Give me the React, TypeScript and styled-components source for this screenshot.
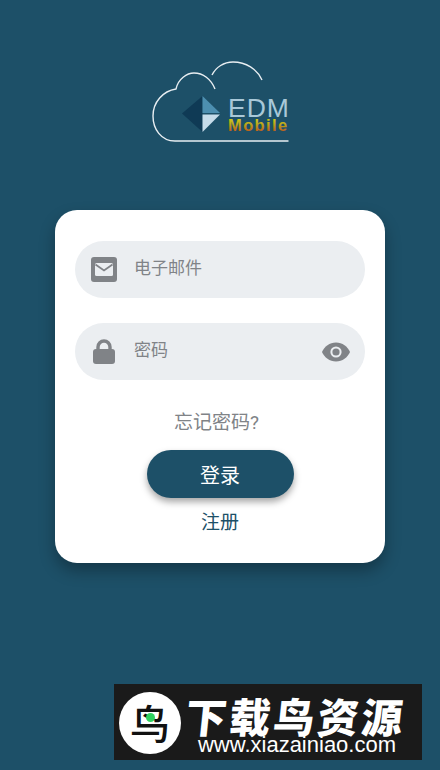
import React from 'react'
import styled, { createGlobalStyle } from 'styled-components'

const mainColor = '#1d5068'
const grey = '#808387'

const GlobalStyle = createGlobalStyle`
  html, body {
    margin: 0;
    padding: 0;
    background: ${mainColor};
    font-family: Roboto, "Noto Sans CJK SC", sans-serif;
  }
`

const Page = styled.div`
  position: relative;
  width: 440px;
  height: 770px;
  overflow: hidden;
  background: ${mainColor};
  display: flex;
  flex-direction: column;
  align-items: center;
  padding-top: 58px;
  box-sizing: border-box;
`

const LogoBox = styled.div`
  width: 144px;
  height: 90px;
  margin-bottom: 62px;
  svg { display: block; }
`

const Card = styled.div`
  width: 330px;
  height: 353px;
  box-sizing: border-box;
  padding: 31px 20px 0;
  background: #fff;
  border-radius: 22px;
  box-shadow: 0 8px 16px rgba(0, 0, 0, .3);
  display: flex;
  flex-direction: column;
  align-items: center;
`

const Field = styled.div<{ last?: boolean }>`
  width: 100%;
  height: 57px;
  flex-shrink: 0;
  margin-bottom: ${props => props.last ? '30px' : '25px'};
  padding: 0 15px 0 15px;
  box-sizing: border-box;
  border-radius: 29px;
  background: #ebeef1;
  display: flex;
  align-items: center;
`

const FieldIcon = styled.div`
  width: 28px;
  height: 28px;
  margin-right: 16px;
  display: flex;
  align-items: center;
  justify-content: center;
`

const FieldLabel = styled.span`
  flex: 1;
  font-size: 17px;
  line-height: 20px;
  margin-top: -4px;
  color: ${grey};
`

const Forgot = styled.div`
  font-size: 19px;
  line-height: 26px;
  color: ${grey};
  margin: 0 7px 14px 0;
`

const LoginButton = styled.button`
  width: 147px;
  height: 48px;
  flex-shrink: 0;
  border: 0;
  border-radius: 24px;
  background: ${mainColor};
  color: #fff;
  font: inherit;
  font-size: 20px;
  box-shadow: 0 4px 7px rgba(0, 0, 0, .35);
  margin-bottom: 12px;
`

const Register = styled.div`
  font-size: 19px;
  line-height: 26px;
  color: ${mainColor};
`

const Watermark = styled.div`
  position: absolute;
  left: 114px;
  top: 684px;
  width: 308px;
  height: 76px;
  box-sizing: border-box;
  padding: 8px 0 0 5px;
  background: #1a1a1a;
  display: flex;
  gap: 5px;
`

const BirdCircle = styled.div`
  position: relative;
  width: 62px;
  height: 62px;
  border-radius: 50%;
  background: #fff;
  color: #111;
  font-size: 40px;
  font-weight: 500;
  line-height: 60px;
  text-align: center;
  font-family: "Noto Sans CJK SC", sans-serif;

  &::after {
    content: '';
    position: absolute;
    left: 27px;
    top: 21px;
    width: 9px;
    height: 9px;
    border-radius: 50%;
    background: #2fd25f;
  }
`

const WatermarkText = styled.div`
  width: 222px;
  display: flex;
  flex-direction: column;
  align-items: center;
`

const WatermarkTitle = styled.div`
  text-align: center;
  color: #fff;
  font-family: "Noto Sans CJK SC", sans-serif;
  font-size: 41px;
  font-weight: 900;
  line-height: 40px;
  letter-spacing: 3px;
  white-space: nowrap;
  transform: skewX(-6deg);
  margin: 3px 3px 0 0;
`

const WatermarkUrl = styled.div`
  color: #fff;
  font-family: "Liberation Sans", sans-serif;
  font-size: 22px;
  line-height: 24px;
  margin-top: -2px;
`

const Logo = () => (
  <svg width="144" height="90" viewBox="0 0 144 90">
    <defs>
      <linearGradient id="mobileFill" x1="0" y1="0" x2="0" y2="1">
        <stop offset="0" stopColor="#d6e01c" />
        <stop offset=".5" stopColor="#b8a01a" />
        <stop offset="1" stopColor="#c2401a" />
      </linearGradient>
    </defs>
    <path
      d="M140.5 83 H27 C13 83 5 71 5 58 C5 44 15 33 28 31 C30 21 39 15 46 15 C55 15 63 21 67 31 M64 17 C68 9 76 4 85 4 C98 4 109 11 114 22"
      fill="none"
      stroke="#e8eef2"
      strokeWidth="1.4"
    />
    <path d="M54.5 38 L34 55.5 L54.5 74 Z" fill="#0f3a55" />
    <path d="M54.5 38 V55 H72 Z" fill="#4d8fb0" />
    <path d="M54.5 74 V56.5 H72 Z" fill="#c6dcea" />
    <text x="80" y="59" fontFamily="'Liberation Sans', sans-serif" fontSize="26.5" letterSpacing="1" fill="#a9c8d8">EDM</text>
    <text x="80" y="73" fontFamily="'Liberation Sans', sans-serif" fontSize="16.5" fontWeight="700" letterSpacing="1.4" fill="url(#mobileFill)">Mobile</text>
  </svg>
)

const MailIcon = () => (
  <svg width="27" height="26" viewBox="0 0 27 26">
    <rect x="0" y="0" width="26" height="25" rx="3" fill={grey} />
    <rect x="4" y="6" width="18" height="13" rx="1.5" fill="#ebeef1" />
    <path d="M4.5 7.5 L13 13.5 L21.5 7.5" fill="none" stroke={grey} strokeWidth="1.8" />
  </svg>
)

const LockIcon = () => (
  <svg width="24" height="26" viewBox="0 0 24 26">
    <path d="M6 12 V8 a6 6 0 0 1 12 0 V12" fill="none" stroke={grey} strokeWidth="3.4" />
    <rect x="1" y="10" width="22" height="15" rx="3" fill={grey} />
  </svg>
)

const EyeIcon = () => (
  <svg width="28" height="20" viewBox="0 0 28 20">
    <path d="M14 .5 C7.5 .5 2.5 4.5 0 10 C2.5 15.5 7.5 19.5 14 19.5 C20.5 19.5 25.5 15.5 28 10 C25.5 4.5 20.5 .5 14 .5 Z" fill={grey} />
    <circle cx="14" cy="10" r="5.6" fill="#ebeef1" />
    <circle cx="14" cy="10" r="3.6" fill={grey} />
  </svg>
)

const App: React.FC = () => {
  return (
    <Page>
      <GlobalStyle />
      <LogoBox>
        <Logo />
      </LogoBox>
      <Card>
        <Field>
          <FieldIcon><MailIcon /></FieldIcon>
          <FieldLabel>电子邮件</FieldLabel>
        </Field>
        <Field last>
          <FieldIcon><LockIcon /></FieldIcon>
          <FieldLabel>密码</FieldLabel>
          <EyeIcon />
        </Field>
        <Forgot>忘记密码?</Forgot>
        <LoginButton>登录</LoginButton>
        <Register>注册</Register>
      </Card>
      <Watermark>
        <BirdCircle>鸟</BirdCircle>
        <WatermarkText>
          <WatermarkTitle>下载鸟资源</WatermarkTitle>
          <WatermarkUrl>www.xiazainiao.com</WatermarkUrl>
        </WatermarkText>
      </Watermark>
    </Page>
  )
}

export default App
